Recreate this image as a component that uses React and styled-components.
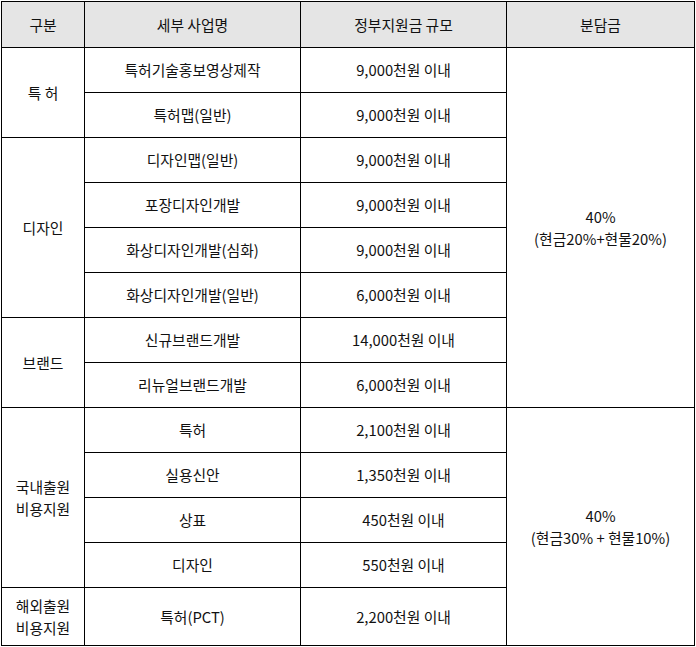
import React from 'react';
import styled, { createGlobalStyle } from 'styled-components';

const GlobalStyle = createGlobalStyle`
  html, body {
    margin: 0;
    padding: 0;
    background: #ffffff;
  }
  body {
    font-family: "Noto Sans CJK KR", "Noto Sans", sans-serif;
    color: #111111;
  }
`;

const Wrap = styled.div`
  padding: 1px 0 0 1px;
`;

const Table = styled.table`
  border-collapse: collapse;
  table-layout: fixed;
  width: 693px;
  font-size: 14.8px;
  td, th {
    border: 1px solid #000;
    text-align: center;
    vertical-align: middle;
    padding: 0;
    line-height: 22px;
  }
`;

const Head = styled.th`
  background: #e5e5e5;
  font-weight: 400;
  height: 45px;
`;

const Row = styled.tr`
  height: ${p => p.$h || 45}px;
`;

const Cell = styled.td`
  font-weight: 400;
`;

const groups = [
  {
    label: '특 허',
    items: [
      ['특허기술홍보영상제작', '9,000천원 이내'],
      ['특허맵(일반)', '9,000천원 이내'],
    ],
  },
  {
    label: '디자인',
    items: [
      ['디자인맵(일반)', '9,000천원 이내'],
      ['포장디자인개발', '9,000천원 이내'],
      ['화상디자인개발(심화)', '9,000천원 이내'],
      ['화상디자인개발(일반)', '6,000천원 이내'],
    ],
  },
  {
    label: '브랜드',
    items: [
      ['신규브랜드개발', '14,000천원 이내'],
      ['리뉴얼브랜드개발', '6,000천원 이내'],
    ],
  },
  {
    label: <>국내출원<br />비용지원</>,
    items: [
      ['특허', '2,100천원 이내'],
      ['실용신안', '1,350천원 이내'],
      ['상표', '450천원 이내'],
      ['디자인', '550천원 이내'],
    ],
  },
  {
    label: <>해외출원<br />비용지원</>,
    items: [['특허(PCT)', '2,200천원 이내']],
    h: 58,
  },
];

const shares = {
  0: { span: 8, text: <>40%<br />(현금20%+현물20%)</> },
  3: { span: 5, text: <>40%<br />(현금30% + 현물10%)</> },
};

export default function App() {
  return (
    <>
      <GlobalStyle />
      <Wrap>
        <Table>
          <colgroup>
            <col style={{ width: 83 }} />
            <col style={{ width: 216 }} />
            <col style={{ width: 206 }} />
            <col style={{ width: 188 }} />
          </colgroup>
          <thead>
            <tr>
              <Head>구분</Head>
              <Head>세부 사업명</Head>
              <Head>정부지원금 규모</Head>
              <Head>분담금</Head>
            </tr>
          </thead>
          <tbody>
            {groups.map((g, gi) =>
              g.items.map((item, ii) => (
                <Row key={`${gi}-${ii}`} $h={g.h}>
                  {ii === 0 && <Cell rowSpan={g.items.length}>{g.label}</Cell>}
                  <Cell>{item[0]}</Cell>
                  <Cell>{item[1]}</Cell>
                  {ii === 0 && shares[gi] && (
                    <Cell rowSpan={shares[gi].span}>{shares[gi].text}</Cell>
                  )}
                </Row>
              ))
            )}
          </tbody>
        </Table>
      </Wrap>
    </>
  );
}
